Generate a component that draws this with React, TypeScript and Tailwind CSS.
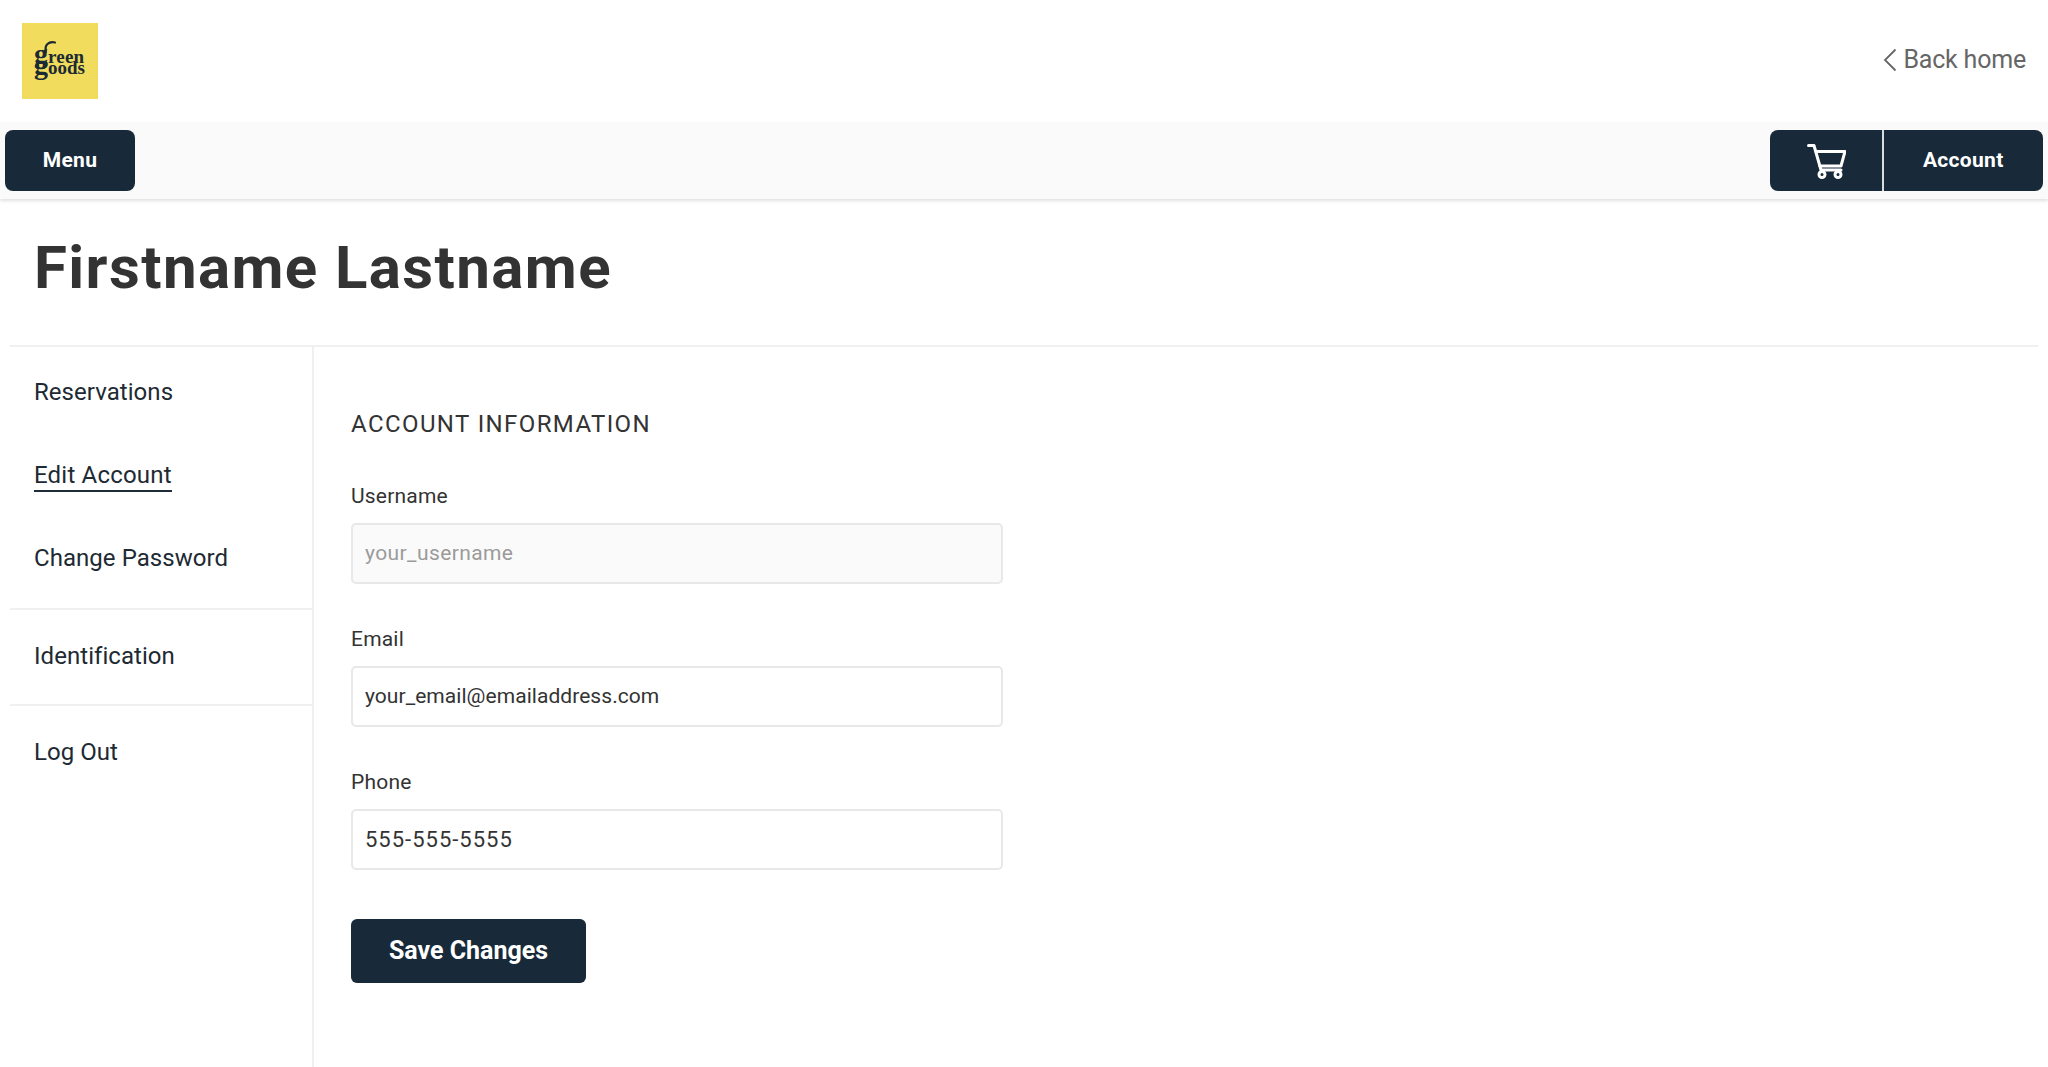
const FONT = "font-['Roboto','Noto_Sans',sans-serif]";

function Logo() {
  return (
    <div className="h-[76px] w-[76px] bg-[#f2dc5d]">
      <svg viewBox="0 0 76 76" className="h-full w-full" fill="#1c2a33" fontFamily="'Liberation Serif', serif" fontWeight="700">
        <path d="M24 29c-2-7 3-11 9-9.5" fill="none" stroke="#1c2a33" strokeWidth="2.2" strokeLinecap="round" />
        <text x="12" y="39.5">
          <tspan fontSize="28">g</tspan>
          <tspan fontSize="19" letterSpacing="0.2">reen</tspan>
        </text>
        <text x="12" y="50.5">
          <tspan fontSize="28">g</tspan>
          <tspan fontSize="19" letterSpacing="0">oods</tspan>
        </text>
      </svg>
    </div>
  );
}

function CartIcon() {
  return (
    <svg viewBox="0 0 40 36" className="h-[36px] w-[40px]" fill="none" stroke="white" strokeWidth="3" strokeLinejoin="round" strokeLinecap="round">
      <path d="M2.5 2.5H8l7 24.5h20" />
      <path d="M10 8.5h29L35 23H14" />
      <circle cx="16" cy="31.5" r="3" />
      <circle cx="32" cy="31.5" r="3" />
    </svg>
  );
}

function NavLink({ label, active }: { label: string; active?: boolean }) {
  return (
    <a className={`text-[24px] leading-[30px] text-[#1e2a33] ${active ? "-mb-[2px] border-b-2 border-[#1f2d3a] tracking-[0.2px]" : "tracking-[0.05px]"}`}>
      {label}
    </a>
  );
}

function Field({ label, value, disabled, spacing }: { label: string; value: string; disabled?: boolean; spacing: string }) {
  return (
    <div className="flex flex-col">
      <label className="mb-[11px] h-[32px] text-[21px] leading-[32px] tracking-[0.2px] text-[#333]">{label}</label>
      <div
        className={`flex h-[61px] w-[652px] items-center rounded-[5px] border-2 border-[#e8e8e8] px-[12px] ${spacing} ${
          disabled ? "bg-[#fafafa] text-[#9a9a9a]" : "bg-white text-[#333]"
        }`}
      >
        {value}
      </div>
    </div>
  );
}

export default function App() {
  return (
    <div className={`h-[1067px] overflow-hidden bg-white ${FONT}`}>
      <header className="flex h-[122px] items-center justify-between pl-[22px] pr-[22px]">
        <Logo />
        <a className="flex items-center pb-[3px] text-[25px] tracking-[-0.2px] text-[#666]">
          <svg viewBox="0 0 14 24" className="mr-[6px] h-[24px] w-[14px]" fill="none" stroke="#666" strokeWidth="1.8">
            <path d="M12.5 1.5 2 12l10.5 10.5" />
          </svg>
          Back home
        </a>
      </header>

      <nav className="flex h-[77px] items-center justify-between bg-[#fafafa] px-[5px] shadow-[0_2px_3px_rgba(0,0,0,0.12)]">
        <button className="h-[61px] w-[130px] rounded-[8px] bg-[#182a3a] text-[21px] font-bold tracking-[0.3px] text-white">Menu</button>
        <div className="flex h-[61px] w-[273px] overflow-hidden rounded-[8px] bg-[#182a3a] text-white">
          <button className="flex w-[112px] items-center justify-center">
            <CartIcon />
          </button>
          <div className="w-[1.5px] bg-[#d8dde0]" />
          <button className="flex-1 text-[21px] font-bold tracking-[0.3px]">Account</button>
        </div>
      </nav>

      <h1 className="flex h-[146px] items-center pb-[9px] pl-[34px] text-[60px] font-bold tracking-[1.4px] text-[#333]">
        Firstname Lastname
      </h1>

      <div className="mx-[10px] flex border-t-2 border-[#f0f0f0]">
        <aside className="flex h-[720px] w-[304px] flex-col border-r-2 border-[#f0f0f0]">
          <div className="flex flex-col items-start gap-[53px] border-b-2 border-[#f0f0f0] pb-[35px] pl-[24px] pt-[30px]">
            <NavLink label="Reservations" />
            <NavLink label="Edit Account" active />
            <NavLink label="Change Password" />
          </div>
          <div className="border-b-2 border-[#f0f0f0] pb-[33px] pl-[24px] pt-[31px]">
            <NavLink label="Identification" />
          </div>
          <div className="pl-[24px] pt-[31px]">
            <NavLink label="Log Out" />
          </div>
        </aside>

        <main className="flex flex-col pl-[37px] pt-[61px]">
          <h2 className="mb-[40px] text-[24px] leading-[32px] tracking-[1.4px] text-[#333]">ACCOUNT INFORMATION</h2>
          <div className="flex flex-col gap-[39px]">
            <Field label="Username" value="your_username" disabled spacing="text-[21px] tracking-[0.4px]" />
            <Field label="Email" value="your_email@emailaddress.com" spacing="text-[21px] tracking-[0.05px]" />
            <Field label="Phone" value="555-555-5555" spacing="text-[22px] tracking-[1px]" />
          </div>
          <button className="mt-[49px] h-[64px] w-[235px] rounded-[6px] bg-[#182a3a] text-[25px] font-bold text-white">
            Save Changes
          </button>
        </main>
      </div>
    </div>
  );
}
